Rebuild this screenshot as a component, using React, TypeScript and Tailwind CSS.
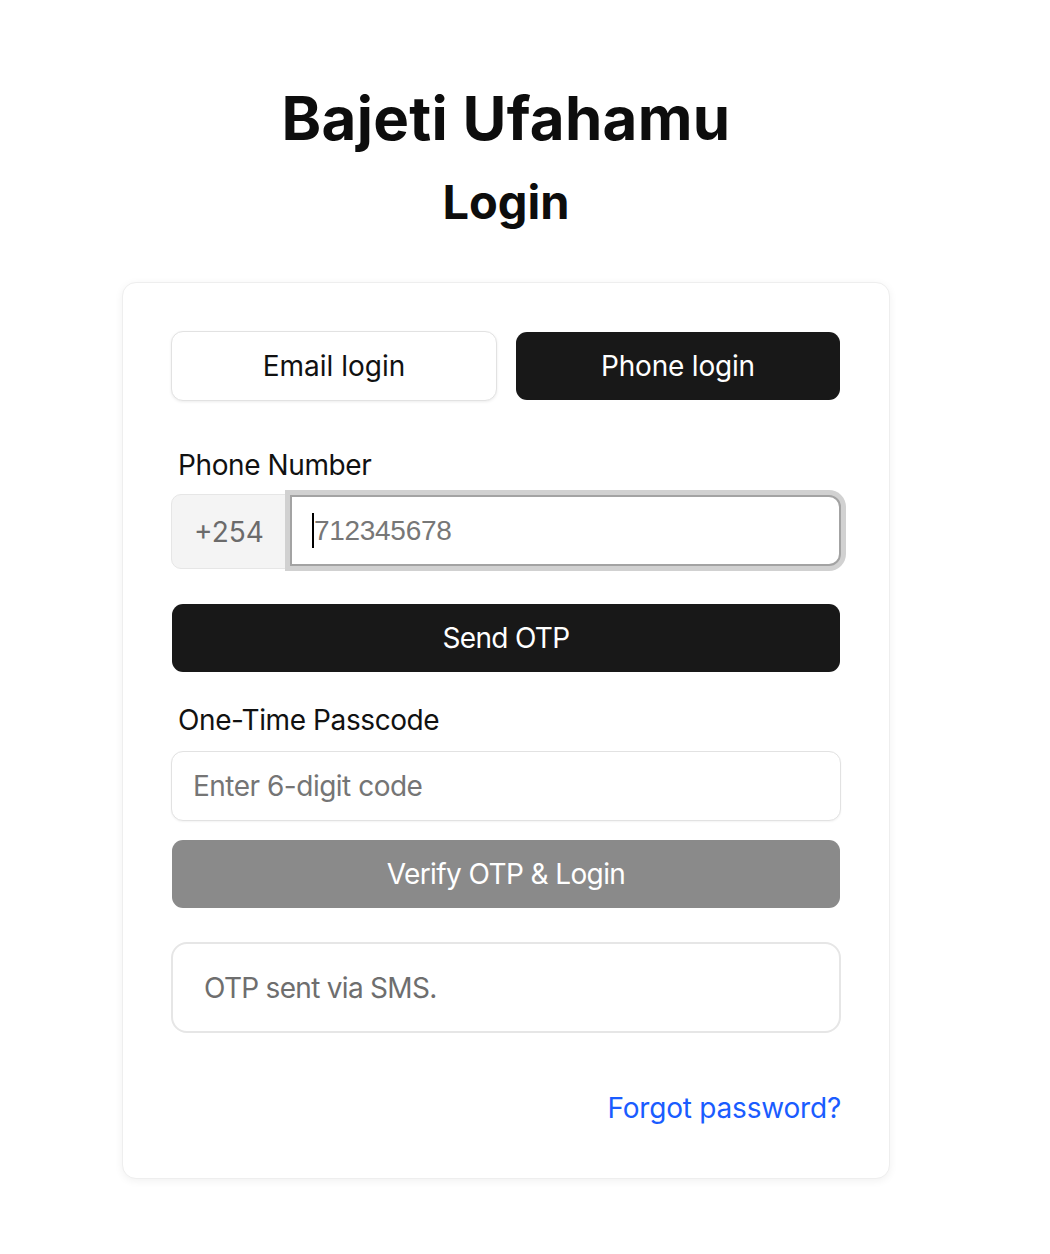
import React from "react";

export default function App() {
  return (
    <div className="min-h-[1254px] bg-white font-['Inter',sans-serif] text-[#111111]">
      <div className="w-[1012px] flex flex-col items-center pt-[82px]">
        <h1 className="text-[60px] leading-[72px] font-bold text-[#0d0d0d] tracking-[0.3px]">Bajeti Ufahamu</h1>
        <h2 className="mt-[20px] text-[47px] leading-[56px] font-bold text-[#0d0d0d]">Login</h2>

        <div className="mt-[52px] w-[768px] rounded-[14px] border border-[#eeeeee] bg-white shadow-[0_2px_8px_rgba(0,0,0,0.06)] px-[48px] pt-[48px] pb-[53px] flex flex-col">
          <div className="grid grid-cols-2 gap-[18px]">
            <button className="h-[70px] rounded-[12px] border border-[#e2e2e2] bg-white shadow-[0_1px_3px_rgba(0,0,0,0.08)] text-[28px] text-[#111111]">
              Email login
            </button>
            <button className="h-[70px] rounded-[12px] border border-transparent bg-clip-padding bg-[#181818] text-[28px] text-white tracking-[-0.2px]">
              Phone login
            </button>
          </div>

          <label className="mt-[47px] pl-[7px] text-[28px] leading-[34px] text-[#111111] tracking-[-0.4px]">Phone Number</label>

          <div className="mt-[12px] flex items-start h-[75px]">
            <div className="w-[116px] h-[75px] shrink-0 rounded-l-[10px] border border-[#e6e6e6] bg-[#f4f4f4] flex items-center justify-center text-[28px] text-[#6b6b6b]">
              +254
            </div>
            <div className="ml-[3px] mt-[1px] w-[552px] h-[71px] rounded-r-[12px] border-2 border-[#a3a3a3] bg-white shadow-[0_0_0_5px_#d1d1d1] flex items-center pl-[20px]">
              <span className="w-[2px] h-[35px] bg-black"></span>
              <span className="font-['Liberation_Sans',Arial,sans-serif] text-[28px] text-[#777777] tracking-[-0.3px]">712345678</span>
            </div>
          </div>

          <button className="mt-[34px] h-[70px] rounded-[12px] border border-transparent bg-clip-padding bg-[#181818] text-[28px] text-white tracking-[-0.7px]">
            Send OTP
          </button>

          <label className="mt-[30px] pl-[7px] text-[28px] leading-[34px] text-[#111111] tracking-[-0.4px]">One-Time Passcode</label>

          <div className="mt-[14px] h-[70px] rounded-[12px] border border-[#e2e2e2] bg-white shadow-[0_1px_2px_rgba(0,0,0,0.05)] flex items-center pl-[21px] text-[28px] text-[#757575] tracking-[-0.5px]">
            Enter 6-digit code
          </div>

          <button className="mt-[18px] h-[70px] rounded-[12px] border border-transparent bg-clip-padding bg-[#8a8a8a] text-[28px] text-white tracking-[-0.6px]">
            Verify OTP &amp; Login
          </button>

          <div className="mt-[33px] h-[91px] rounded-[16px] border-2 border-[#e6e6e6] bg-white flex items-center pl-[31px] text-[28px] text-[#6e6e6e] tracking-[-0.7px]">
            OTP sent via SMS.
          </div>

          <div className="mt-[58px] flex justify-end">
            <a className="text-[28px] leading-[34px] text-[#1a5cff] tracking-[-0.2px]" href="#">Forgot password?</a>
          </div>
        </div>
      </div>
    </div>
  );
}
